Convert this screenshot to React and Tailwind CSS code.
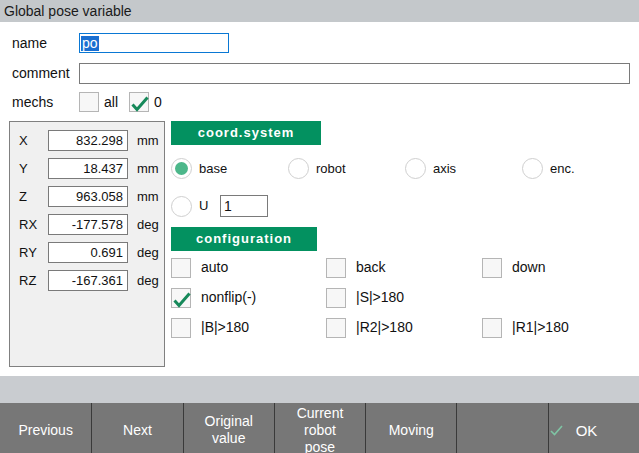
import React from 'react';

const POSE = [
  { k: 'X', v: '832.298', u: 'mm' },
  { k: 'Y', v: '18.437', u: 'mm' },
  { k: 'Z', v: '963.058', u: 'mm' },
  { k: 'RX', v: '-177.578', u: 'deg' },
  { k: 'RY', v: '0.691', u: 'deg' },
  { k: 'RZ', v: '-167.361', u: 'deg' },
];

const COORDS = [
  { label: 'base', on: true },
  { label: 'robot' },
  { label: 'axis' },
  { label: 'enc.' },
];

const CONFIG = [
  [{ label: 'auto' }, { label: 'back' }, { label: 'down' }],
  [{ label: 'nonflip(-)', on: true }, { label: '|S|>180' }, null],
  [{ label: '|B|>180' }, { label: '|R2|>180' }, { label: '|R1|>180' }],
];

const BUTTONS = ['Previous', 'Next', 'Original value', 'Current robot pose', 'Moving', ''];

function Check({ on }) {
  return (
    <div className="w-[20px] h-[20px] shrink-0 border border-[#b5b5b5] bg-[#f7f7f7] relative">
      {on && (
        <svg className="absolute left-0 top-0" width="20" height="20" viewBox="0 0 20 20">
          <path d="M2.5 11.5 L7 16.5 L17.5 4.5" fill="none" stroke="#16895a" strokeWidth="3" />
        </svg>
      )}
    </div>
  );
}

function Radio({ on }) {
  return (
    <div className="w-[21px] h-[21px] shrink-0 rounded-full border border-[#cfcfcf] bg-white flex items-center justify-center">
      {on && <div className="w-[13px] h-[13px] rounded-full bg-[#4cb78a]" />}
    </div>
  );
}

function Header({ children, w }) {
  return (
    <div className={`${w} h-[24px] bg-[#039160] text-white font-bold text-[13px] tracking-[1px] flex items-center justify-center`}>
      {children}
    </div>
  );
}

export default function App() {
  return (
    <div className="w-[639px] h-[453px] bg-white overflow-hidden flex flex-col text-[#111] font-['Liberation_Sans',Arial,sans-serif]">
      {/* title */}
      <div className="h-[22px] bg-[#c4c8cb] px-[4px] text-[14px] leading-[22px] text-[#1a1a1a]">Global pose variable</div>

      {/* name */}
      <div className="mt-[11px] h-[20px] flex items-center text-[14px]">
        <span className="w-[79px] pl-[12px]">name</span>
        <div className="w-[150px] h-[20px] border border-[#0a78d4] flex items-center px-[1px]">
          <span className="bg-[#1a6fd1] text-white leading-[15px] px-[1px]">po</span>
        </div>
      </div>

      {/* comment */}
      <div className="mt-[10px] h-[21px] flex items-center text-[14px]">
        <span className="w-[79px] pl-[12px]">comment</span>
        <div className="w-[551px] h-[21px] border border-[#7a7a7a]" />
      </div>

      {/* mechs */}
      <div className="mt-[8px] h-[20px] flex items-center text-[14px]">
        <span className="w-[79px] pl-[12px]">mechs</span>
        <Check />
        <span className="ml-[5px] w-[25px]">all</span>
        <Check on />
        <span className="ml-[5px]">0</span>
      </div>

      {/* main */}
      <div className="mt-[9px] h-[246px] flex">
        <div className="ml-[9px] w-[156px] h-[246px] border border-[#808080] bg-[#f0f0f0] pt-[8px] pl-[9px] flex flex-col gap-[7px] text-[13px]">
          {POSE.map(p => (
            <div key={p.k} className="h-[21px] flex items-center">
              <span className="w-[29px]">{p.k}</span>
              <div className="w-[80px] h-[21px] border border-[#7a7a7a] bg-white flex items-center justify-end pr-[4px]">{p.v}</div>
              <span className="ml-[9px]">{p.u}</span>
            </div>
          ))}
        </div>

        <div className="ml-[6px] flex flex-col text-[13px]">
          <Header w="w-[150px]">coord.system</Header>
          <div className="mt-[13px] h-[21px] grid grid-cols-[117px_117px_117px_117px]">
            {COORDS.map(c => (
              <div key={c.label} className="flex items-center gap-[7px]">
                <Radio on={c.on} />
                <span>{c.label}</span>
              </div>
            ))}
          </div>
          <div className="mt-[16px] h-[22px] flex items-center">
            <Radio />
            <span className="ml-[7px] w-[21px]">U</span>
            <div className="w-[48px] h-[22px] border border-[#7a7a7a] flex items-center pl-[3px] text-[14px]">1</div>
          </div>
          <div className="mt-[10px]">
            <Header w="w-[146px]">configuration</Header>
          </div>
          <div className="mt-[6px] flex flex-col gap-[10px] text-[14px]">
            {CONFIG.map((row, i) => (
              <div key={i} className="h-[20px] grid grid-cols-[155px_156px_155px]">
                {row.map((c, j) => (
                  <div key={j} className="flex items-center gap-[10px]">
                    {c && <Check on={c.on} />}
                    {c && <span>{c.label}</span>}
                  </div>
                ))}
              </div>
            ))}
          </div>
        </div>
      </div>

      {/* band */}
      <div className="mt-[9px] h-[27px] bg-[#c9ccd0]" />

      {/* buttons */}
      <div className="h-[50px] bg-[#777777] grid grid-cols-7 text-white text-[14px] leading-[17px]">
        {BUTTONS.map((b, i) => (
          <div key={i} className={`overflow-hidden flex items-center justify-center text-center pt-[4px] px-[6px] ${i > 0 ? 'border-l border-[#3a3a3a]' : ''}`}>
            <span className={b === 'Current robot pose' ? 'w-[50px]' : 'w-[70px]'}>{b}</span>
          </div>
        ))}
        <div className="border-l border-[#3a3a3a] flex items-center pt-[4px] pl-[1px] gap-[13px]">
          <svg width="13" height="11" viewBox="0 0 13 11">
            <path d="M1 6 L4.5 9.5 L12 1" fill="none" stroke="#7fc4a4" strokeWidth="1.6" />
          </svg>
          <span className="text-[15px]">OK</span>
        </div>
      </div>
    </div>
  );
}
